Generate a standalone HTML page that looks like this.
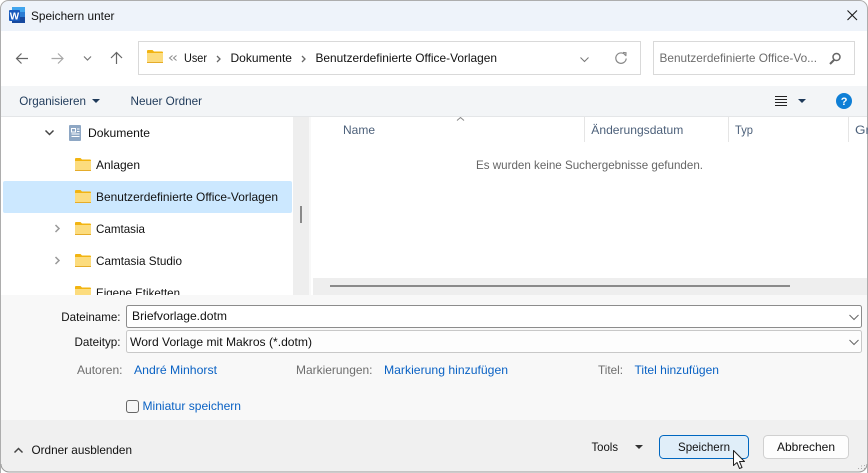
<!DOCTYPE html>
<html lang="de"><head><meta charset="utf-8"><title>Speichern unter</title>
<style>
html,body{margin:0;padding:0;background:#fff;width:868px;height:473px;overflow:hidden}
svg{display:block;position:absolute;left:0;top:0}
text{font-family:"Liberation Sans",sans-serif;font-size:12px;fill:#111;white-space:pre}
.b{fill:#0a62c4}
.g{fill:#6d6d6d}
.n{fill:#1f3a5a}
.h{fill:#4c607a}
</style></head><body>
<svg width="868" height="473" viewBox="0 0 868 473" xmlns="http://www.w3.org/2000/svg">
<defs>
<g id="f"><path d="M0 2a1 1 0 0 1 1-1h4.500l1.500 1.500h8a1 1 0 0 1 1 1v1.500H0z" fill="#f2b411"/><path d="M0 4h16V13a1 1 0 0 1-1 1H1a1 1 0 0 1-1-1z" fill="#fcdc7e"/><path d="M0 13h16V14H0z" fill="#e5ac2a"/></g>
<clipPath id="tree"><rect x="1" y="117" width="292" height="178"/></clipPath>
<clipPath id="hdr"><rect x="311" y="117" width="557" height="40"/></clipPath>
</defs>
<path d="M.5 473V9A8 8 0 0 1 8.500.5h851a8 8 0 0 1 8 8V473" fill="#fff"/>
<path d="M1 31V9a8 8 0 0 1 8-8h850a8 8 0 0 1 8 8v22z" fill="#eef3fa"/>
<rect x="1" y="86" width="866" height="30" fill="#f3f5f7"/>
<rect x="1" y="116" width="866" height="1" fill="#e4e6e8"/>

<rect x="293" y="117" width="16" height="178" fill="#eeeeee"/>
<rect x="309" y="117" width="2" height="178" fill="#f8f8f8"/>
<rect x="300" y="206" width="2" height="17" fill="#8a8a8a"/>
<rect x="313" y="278" width="555" height="17" fill="#eeeeee"/>
<rect x="330" y="285" width="460" height="2" fill="#8a8a8a"/>

<rect x="1" y="295" width="866" height="125" fill="#f8f8f8"/>
<path d="M1 420H867V464a8 8 0 0 1-8 8H9a8 8 0 0 1-8-8z" fill="#f0f0f0"/>
<path d="M.5 473V9A8 8 0 0 1 8.500.5h851a8 8 0 0 1 8 8V473" fill="none" stroke="#adadad"/>
<path d="M1 464a8 8 0 0 0 8 8h850a8 8 0 0 0 8-8" fill="none" stroke="#9a9a9a"/>

<!-- Word icon -->
<rect x="12" y="7" width="13" height="16" rx="1" fill="#1f63c0"/>
<rect x="12" y="7" width="13" height="5" fill="#41a5ee"/>
<rect x="12" y="12" width="13" height="5" fill="#2b7cd3"/>
<rect x="12" y="17" width="13" height="6" fill="#17499e"/>
<rect x="9" y="10" width="11" height="11" rx="1" fill="#185abd"/>
<text x="9.800" y="19.500" style="font-size:10px;font-weight:bold;fill:#fff" textLength="9.400" lengthAdjust="spacingAndGlyphs">W</text>
<text x="31" y="20" textLength="83.500" lengthAdjust="spacingAndGlyphs">Speichern unter</text>
<path d="M847.500 10.500l9.500 9.500M857 10.500l-9.500 9.500" stroke="#1a1a1a" stroke-width="1.100" fill="none"/>

<!-- nav -->
<path d="M28 58.500H16.500M21.500 53.500l-5 5 5 5" stroke="#666" stroke-width="1.200" fill="none"/>
<path d="M51.500 58.500H63M58 53.500l5 5-5 5" stroke="#a8a8a8" stroke-width="1.200" fill="none"/>
<path d="M84 56.500l3.500 3.500 3.500-3.500" stroke="#777" stroke-width="1.200" fill="none"/>
<path d="M116.500 64V52.500M111 58l5.500-5.500 5.500 5.500" stroke="#666" stroke-width="1.200" fill="none"/>

<rect x="138.500" y="41.500" width="502" height="33" fill="#fff" stroke="#d9d9d9"/>
<use href="#f" x="147" y="49"/>
<path d="M172.500 55.500l-3 2.500 3 2.500M176.500 55.500l-3 2.500 3 2.500" stroke="#8a8a8a" fill="none"/>
<text x="184" y="62" textLength="23" lengthAdjust="spacingAndGlyphs">User</text>
<path d="M217 56l3 3-3 3" stroke="#666" stroke-width="1.300" fill="none"/>
<text x="230.500" y="62" textLength="61.500" lengthAdjust="spacingAndGlyphs">Dokumente</text>
<path d="M302 56l3 3-3 3" stroke="#666" stroke-width="1.300" fill="none"/>
<text x="315.500" y="62" textLength="181.500" lengthAdjust="spacingAndGlyphs">Benutzerdefinierte Office-Vorlagen</text>
<path d="M580.500 57.500l4 4 4-4" stroke="#777" fill="none"/>
<path d="M625.500 55.500a5.200 5.200 0 1 0 .7 3" stroke="#888" stroke-width="1.200" fill="none"/>
<path d="M623 52.500l3 .3-.2 3.300" stroke="#888" stroke-width="1.200" fill="none"/>

<rect x="653.500" y="41.500" width="201" height="33" fill="#fff" stroke="#d9d9d9"/>
<text class="g" x="659.500" y="62" textLength="157.500" lengthAdjust="spacingAndGlyphs">Benutzerdefinierte Office-Vo...</text>
<circle cx="836.500" cy="57" r="3.500" fill="none" stroke="#666" stroke-width="1.500"/>
<path d="M834 60l-4 4" stroke="#666" stroke-width="2"/>

<!-- toolbar -->
<text class="n" x="19.300" y="105" textLength="66.700" lengthAdjust="spacingAndGlyphs">Organisieren</text>
<path d="M92 99h8l-4 4z" fill="#1f3a5a"/>
<text class="n" x="130.500" y="105" textLength="71.500" lengthAdjust="spacingAndGlyphs">Neuer Ordner</text>
<path d="M775 96.500h12M775 99.500h12M775 102.500h12M775 105.500h12" stroke="#222" fill="none"/>
<path d="M798 99h8l-4 4z" fill="#1f3a5a"/>
<circle cx="844" cy="101" r="8" fill="#0f7fd6"/>
<text x="840.800" y="105" style="font-size:11px;font-weight:bold;fill:#fff">?</text>

<!-- tree -->
<rect x="3" y="181" width="289" height="32" rx="2" fill="#cce8ff"/>
<g clip-path="url(#tree)">
<path d="M45.500 130.500l4 4 4-4" stroke="#444" stroke-width="1.500" fill="none"/>
<rect x="69" y="125" width="12" height="16" rx="1" fill="#8ea7c4"/>
<path d="M71.500 128.500h4v3.500h-4zM77 129h2.500M77 131.500h2.500M71.500 134h8M71.500 136.500h8" stroke="#fff" fill="none"/>
<text x="88" y="137" textLength="62" lengthAdjust="spacingAndGlyphs">Dokumente</text>
<use href="#f" x="75" y="157"/>
<text x="96" y="169" textLength="44" lengthAdjust="spacingAndGlyphs">Anlagen</text>
<use href="#f" x="75" y="189"/>
<text x="96" y="201" textLength="182" lengthAdjust="spacingAndGlyphs">Benutzerdefinierte Office-Vorlagen</text>
<path d="M55.500 225l3.500 3.500-3.500 3.500" stroke="#999" stroke-width="1.500" fill="none"/>
<use href="#f" x="75" y="221"/>
<text x="96" y="233" textLength="49" lengthAdjust="spacingAndGlyphs">Camtasia</text>
<path d="M55.500 257l3.500 3.500-3.500 3.500" stroke="#999" stroke-width="1.500" fill="none"/>
<use href="#f" x="75" y="253"/>
<text x="96" y="265" textLength="86" lengthAdjust="spacingAndGlyphs">Camtasia Studio</text>
<use href="#f" x="75" y="285"/>
<text x="96" y="297" textLength="84" lengthAdjust="spacingAndGlyphs">Eigene Etiketten</text>
</g>

<!-- header -->
<g clip-path="url(#hdr)">
<path d="M457 120.500l3.500-3 3.500 3" stroke="#888" fill="none"/>
<text class="h" x="343" y="134" textLength="32" lengthAdjust="spacingAndGlyphs">Name</text>
<rect x="584" y="117" width="1" height="25" fill="#e5e5e5"/>
<text class="h" x="591.300" y="134" textLength="92" lengthAdjust="spacingAndGlyphs">Änderungsdatum</text>
<rect x="728" y="117" width="1" height="25" fill="#e5e5e5"/>
<text class="h" x="735" y="134" textLength="18" lengthAdjust="spacingAndGlyphs">Typ</text>
<rect x="848" y="117" width="1" height="25" fill="#e5e5e5"/>
<text class="h" x="855" y="134" textLength="15" lengthAdjust="spacingAndGlyphs">Gr</text>
</g>
<text x="476" y="169" style="fill:#666" textLength="227" lengthAdjust="spacingAndGlyphs">Es wurden keine Suchergebnisse gefunden.</text>

<!-- form -->
<text x="61.300" y="321" textLength="59.200" lengthAdjust="spacingAndGlyphs">Dateiname:</text>
<rect x="126.500" y="305.500" width="735" height="22" rx="2" fill="#fff" stroke="#8c8c8c"/>
<text x="132" y="320" textLength="95" lengthAdjust="spacingAndGlyphs">Briefvorlage.dotm</text>
<path d="M849.500 315l4.500 4.500 4.500-4.500" stroke="#666" fill="none"/>
<text x="74.500" y="346" textLength="46" lengthAdjust="spacingAndGlyphs">Dateityp:</text>
<rect x="126.500" y="330.500" width="735" height="22" rx="2" fill="#fdfdfd" stroke="#c8c8c8"/>
<text x="130" y="346" textLength="182" lengthAdjust="spacingAndGlyphs">Word Vorlage mit Makros (*.dotm)</text>
<path d="M849.500 340l4.500 4.500 4.500-4.500" stroke="#666" fill="none"/>

<text class="g" x="77" y="374" textLength="45.500" lengthAdjust="spacingAndGlyphs">Autoren:</text>
<text class="b" x="134" y="374" textLength="83" lengthAdjust="spacingAndGlyphs">André Minhorst</text>
<text class="g" x="296" y="374" textLength="76.500" lengthAdjust="spacingAndGlyphs">Markierungen:</text>
<text class="b" x="384" y="374" textLength="124" lengthAdjust="spacingAndGlyphs">Markierung hinzufügen</text>
<text class="g" x="598" y="374" textLength="25" lengthAdjust="spacingAndGlyphs">Titel:</text>
<text class="b" x="634.500" y="374" textLength="84.500" lengthAdjust="spacingAndGlyphs">Titel hinzufügen</text>
<rect x="126.500" y="400.500" width="12" height="12" rx="2.500" fill="#f6f6f6" stroke="#666"/>
<text class="b" x="142.500" y="410" textLength="98.500" lengthAdjust="spacingAndGlyphs">Miniatur speichern</text>

<!-- footer -->
<path d="M14.500 452.500l4-4 4 4" stroke="#444" stroke-width="1.500" fill="none"/>
<text x="31.500" y="454" textLength="100.500" lengthAdjust="spacingAndGlyphs">Ordner ausblenden</text>
<text x="591.500" y="451" textLength="26.500" lengthAdjust="spacingAndGlyphs">Tools</text>
<path d="M635 445h8l-4 4z" fill="#333"/>
<rect x="659.500" y="435.500" width="89" height="23" rx="4" fill="#e0eef9" stroke="#0067c0"/>
<text x="678" y="451" textLength="52" lengthAdjust="spacingAndGlyphs">Speichern</text>
<rect x="763.500" y="435.500" width="85" height="23" rx="4" fill="#fdfdfd" stroke="#d0d0d0"/>
<text x="777" y="451" textLength="58" lengthAdjust="spacingAndGlyphs">Abbrechen</text>
<path d="M733.500 450.500v15l3.500-3 2.500 6 2.500-1-2.500-6h5z" fill="#fff" stroke="#222" stroke-width="1" stroke-linejoin="round"/>
<path d="M864 465h1v1h-1zM864 468h1v1h-1zM861 468h1v1h-1zM858 468h1v1h-1zM861 465.500h1v1h-1z" fill="#aaa"/>
</svg>
</body></html>
